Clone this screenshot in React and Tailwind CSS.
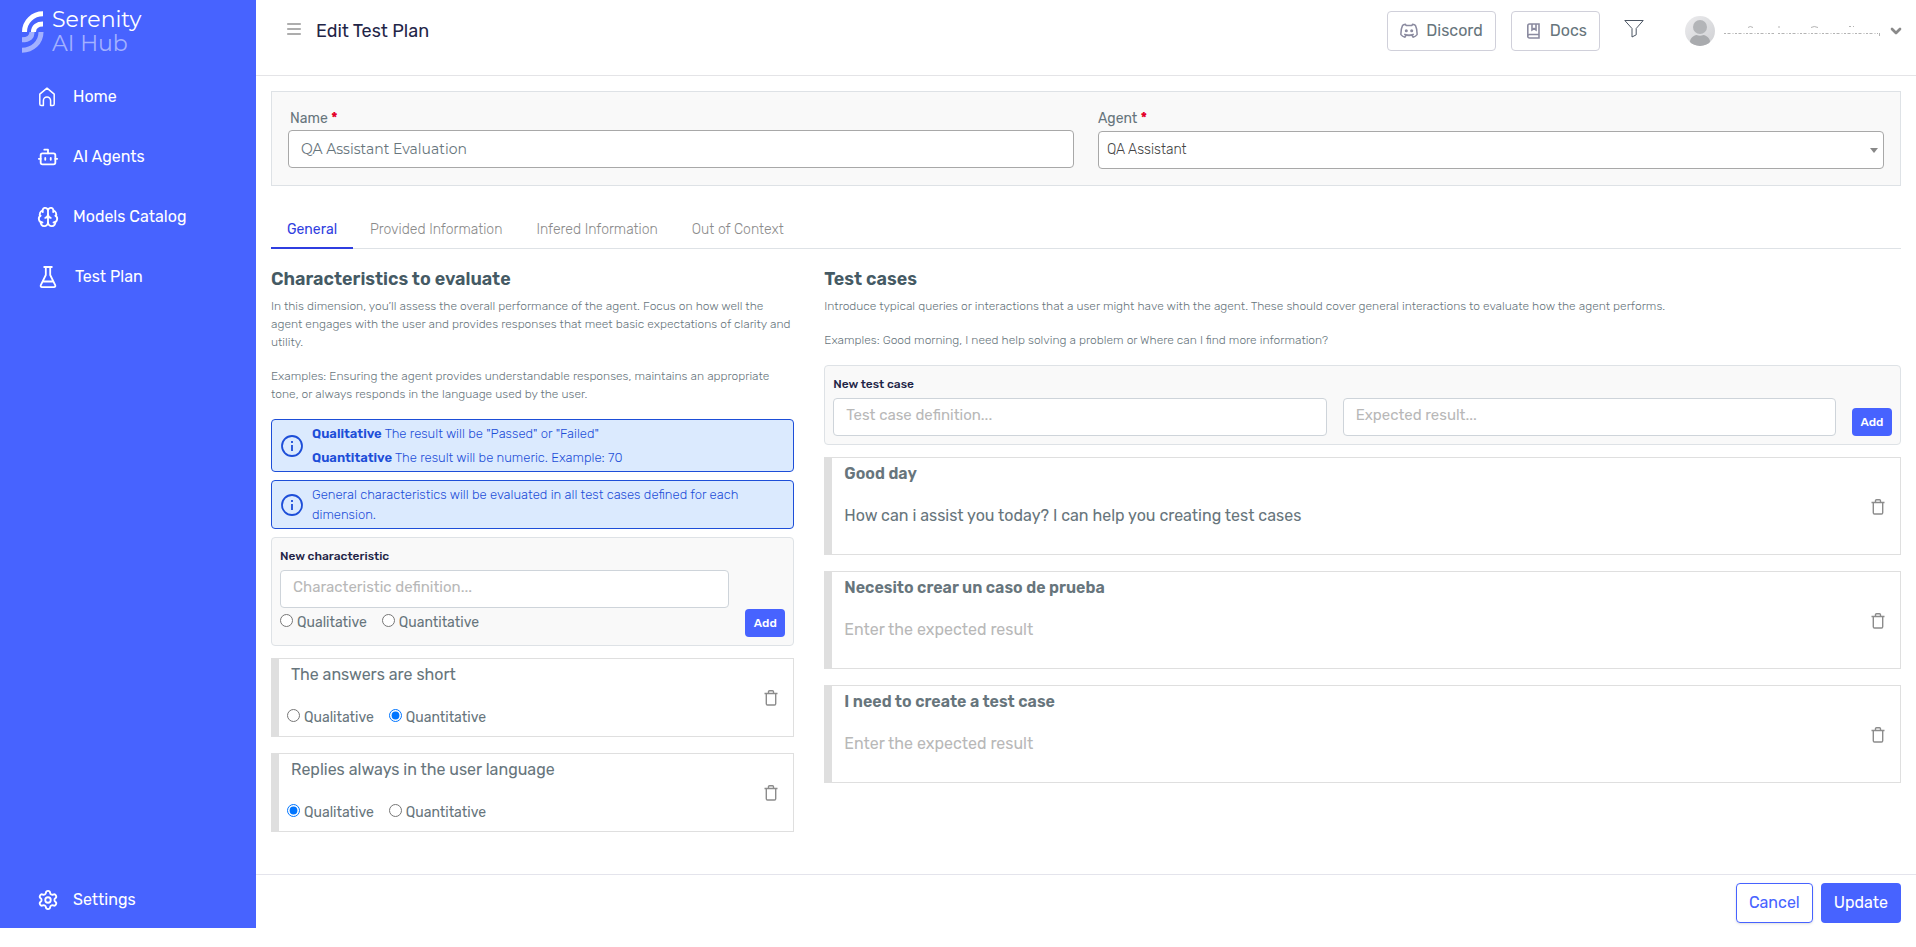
import React, { useState } from 'react';
import { Bot, Brain, Settings, ChevronDown } from 'lucide-react';

const navItems = [
    { label: 'Home', icon: 'home' },
    { label: 'AI Agents', icon: 'bot' },
    { label: 'Models Catalog', icon: 'brain' },
    { label: 'Test Plan', icon: 'flask' },
];

const tabs = ['General', 'Provided Information', 'Infered Information', 'Out of Context'];

const initialCharacteristics = [
    { id: 1, text: 'The answers are short', type: 'quantitative' },
    { id: 2, text: 'Replies always in the user language', type: 'qualitative' },
];

const initialTestCases = [
    { id: 1, input: 'Good day', expected: 'How can i assist you today? I can help you creating test cases' },
    { id: 2, input: 'Necesito crear un caso de prueba', expected: '' },
    { id: 3, input: 'I need to create a test case', expected: '' },
];

const Logo = () => (
    <a href="#" className="flex items-center gap-2 pt-2 pl-[22px] text-white">
        <svg width="22" height="42" viewBox="0 0 22 42" fill="none" strokeWidth="5">
            <path d="M2.5 21C2.5 10.5 11 2.8 21 2.8" stroke="#fff" />
            <path d="M11.5 21C11.5 15.5 15.5 13 21 13" stroke="#fff" />
            <path d="M19 21C19 31.5 10.5 39.2 0 39.2" stroke="#a3b1ff" />
            <path d="M10 21C10 26 6.5 28.8 0 28.8" stroke="#a3b1ff" />
        </svg>
        <span className="flex flex-col font-['Montserrat','Rubik','Roboto',sans-serif] text-[22px] leading-6">
            <span>Serenity</span>
            <span className="text-[#a3b1ff]">AI Hub</span>
        </span>
    </a>
);

const NavIcon = ({ name }) => {
    if (name === 'bot') return <Bot size={22} strokeWidth={2} />;
    if (name === 'brain') return <Brain size={22} strokeWidth={2} />;
    if (name === 'settings') return <Settings size={22} strokeWidth={2} />;
    if (name === 'home') {
        return (
            <svg width="22" height="22" viewBox="0 0 22 22" fill="none" stroke="currentColor" strokeWidth="1.5" strokeLinejoin="round">
                <path d="M2.8 8.2 10 2.2 17.2 8.2V18a1.6 1.6 0 0 1-1.6 1.6H13.6v-5a3.6 3.6 0 0 0-7.2 0v5H4.4A1.6 1.6 0 0 1 2.8 18z" />
            </svg>
        );
    }
    return (
        <svg width="24" height="24" viewBox="0 0 24 24" fill="none" stroke="currentColor" strokeWidth="1.8" strokeLinejoin="round">
            <path d="M6.5 2h9M8.8 2v8L3.8 20.2c-.5 1 .1 1.900 1.200 1.900h12c1.100 0 1.700-.9 1.200-1.900L13.200 10V2M6 16.500h10" />
        </svg>
    );
};

const NavLink = ({ label, icon }) => (
    <a href="#" className="flex h-14 items-center gap-[14px] pl-[37px] text-base text-white">
        <NavIcon name={icon} />
        {label}
    </a>
);

const Trash = () => (
    <svg width="14" height="16" viewBox="0 0 14 16" fill="none" stroke="#8c8c8c" strokeWidth="1.4">
        <path d="M.5 3.5h13M4.5 3.5V1.800c0-.6.400-1 1-1h3c.6 0 1 .4 1 1v1.700M2.300 3.500v10.300c0 .7.500 1.200 1.200 1.200h7c.7 0 1.200-.5 1.200-1.200V3.500" />
    </svg>
);

const InfoIcon = () => (
    <svg className="shrink-0" width="22" height="22" viewBox="0 0 22 22" fill="none" stroke="#1d4ed8" strokeWidth="1.8">
        <circle cx="11" cy="11" r="10" />
        <path d="M11 10v6M11 6v2" />
    </svg>
);

const TypeRadios = ({ name, value, onChange }) => (
    <div className="flex gap-[15px] text-sm text-[#67757c]">
        {['Qualitative', 'Quantitative'].map((label) => (
            <label key={label} className="flex items-center gap-1">
                <input
                    type="radio"
                    name={name}
                    className="mb-[6px] size-[13px] accent-[#0075ff]"
                    checked={value === label.toLowerCase()}
                    onChange={() => onChange(label.toLowerCase())}
                />
                {label}
            </label>
        ))}
    </div>
);

const inputClass =
    'h-[38px] w-full min-w-0 rounded-sm border border-[#ced4da] bg-white px-3 pb-1 text-[15px] text-[#67757c] placeholder:text-[#b8b8b8]';

const Header = () => (
    <header className="flex h-[76px] items-start border-b border-[#e4e4e7] pt-[11px] pr-3 pl-[31px]">
        <button aria-label="Toggle menu" className="mt-3">
            <svg width="14" height="12" viewBox="0 0 14 12" stroke="#929292" strokeWidth="1.4" strokeLinecap="round">
                <path d="M.7 1h12.6M.7 6h12.6M.7 11h12.6" />
            </svg>
        </button>
        <h1 className="mt-[6px] ml-[15px] text-lg leading-7 text-[#1f2547]">Edit Test Plan</h1>
        <div className="ml-auto flex">
            <button className="flex h-10 items-center gap-2 rounded border border-[#d0d0da] px-3 text-base text-[#67757c]">
                <svg width="18" height="16" viewBox="0 0 18 16" fill="none" stroke="#8b8ba0" strokeWidth="1.5" strokeLinejoin="round">
                    <path d="M6 2.5 5.5 1.3C4 1.5 3 2 2.5 2.6 1.3 5 .8 8 .9 11.600 2 13 3.500 13.800 5 14.200l1-1.900h6l1 1.900c1.500-.4 3-1.200 4.100-2.600C17.200 8 16.700 5 15.500 2.600 15 2 14 1.500 12.500 1.300L12 2.500z" />
                    <path d="M4.2 11.300c3 1.400 6.600 1.400 9.600 0" />
                    <circle cx="6.3" cy="7.8" r="0.8" fill="#8b8ba0" />
                    <circle cx="11.7" cy="7.8" r="0.8" fill="#8b8ba0" />
                </svg>
                Discord
            </button>
            <button className="ml-[15px] flex h-10 items-center gap-2 rounded border border-[#d0d0da] px-3 text-base text-[#67757c]">
                <svg width="18" height="16" viewBox="-2 0 18 16" fill="none" stroke="#8b8ba0" strokeWidth="1.6">
                    <path d="M13 11.5H3.500a1.700 1.700 0 0 0 0 3.500H13V1H3.500C2.500 1 1.800 1.700 1.800 2.700v10.500M13 11v4M6 1v6L8 5.500 10 7V1" />
                </svg>
                Docs
            </button>
            <button aria-label="Filter" className="mt-[7px] ml-6 h-5">
                <svg width="20" height="19" viewBox="0 0 20 19" fill="none" stroke="#4b5563" strokeWidth="1">
                    <path d="M.8 1.5h18.4L12.2 9.500v6.300L8 18V9.500z" />
                </svg>
            </button>
            <button aria-label="Account" className="mt-[5px] ml-[41px] flex h-[30px] items-center">
                <svg width="30" height="30" viewBox="0 0 30 30">
                    <defs>
                        <clipPath id="avatar">
                            <circle cx="15" cy="15" r="15" />
                        </clipPath>
                        <linearGradient id="avatar-bg" x1="0" y1="0" x2="1" y2="1">
                            <stop offset="0" stopColor="#ececee" />
                            <stop offset="1" stopColor="#cfd0d3" />
                        </linearGradient>
                    </defs>
                    <g clipPath="url(#avatar)">
                        <rect width="30" height="30" fill="url(#avatar-bg)" />
                        <circle cx="15" cy="11" r="7" fill="#b3b5b8" />
                        <path d="M5 30v-4c0-4 3.500-6.500 6.500-7 2 1 5 1 7 0 3 .5 6.500 3 6.500 7v4z" fill="#a9abae" />
                    </g>
                </svg>
                <svg className="ml-[9px]" width="158" height="12" viewBox="0 0 158 12" fill="none" stroke="#b4b4b4">
                    <path d="M0 8.500h50M54 8.500h100" strokeDasharray="2 1.500 3 2 1 1.500" />
                    <path d="M24 2.500q2-2 5 0M55 1v2M87 2.500q3-2 7 0M125 1.500h2M129 1.500h1M155.500 8v3" />
                </svg>
                <ChevronDown className="ml-[6px] text-[#8a8a8a]" size={16} strokeWidth={4} />
            </button>
        </div>
    </header>
);

const PlanForm = () => (
    <section className="grid grid-cols-2 gap-6 border border-[#dee2e6] bg-[#f9f9f9] px-4 pt-[17px] pb-4">
        <div>
            <label htmlFor="plan-name" className="block h-[21px] pl-[2px] text-sm leading-5 text-[#67757c]">
                Name <span className="font-bold text-[#e4002b]">*</span>
            </label>
            <input
                id="plan-name"
                defaultValue="QA Assistant Evaluation"
                className="h-[38px] w-full rounded-sm border border-[#a8a8a8] bg-white px-3 font-['Montserrat','Rubik','Roboto',sans-serif] text-sm text-[#67757c]"
            />
        </div>
        <div>
            <label htmlFor="plan-agent" className="block h-[22px] text-sm leading-5 text-[#67757c]">
                Agent <span className="font-bold text-[#e4002b]">*</span>
            </label>
            <div className="relative">
                <select
                    id="plan-agent"
                    className="h-[38px] w-full appearance-none rounded-sm border border-[#a8a8a8] bg-white px-2 text-sm font-light text-[#444]"
                >
                    <option>QA Assistant</option>
                </select>
                <span className="pointer-events-none absolute top-[17px] right-[6px] border-x-4 border-t-[5px] border-x-transparent border-t-[#888]" />
            </div>
        </div>
    </section>
);

const Characteristics = () => {
    const [items, setItems] = useState(initialCharacteristics);
    const [draft, setDraft] = useState('');
    const [draftType, setDraftType] = useState('');

    const updateType = (id, type) => {
        setItems(items.map((item) => (item.id === id ? { ...item, type } : item)));
    };

    const addItem = () => {
        if (!draft || !draftType) return;
        setItems([...items, { id: Date.now(), text: draft, type: draftType }]);
        setDraft('');
        setDraftType('');
    };

    return (
        <section className="col-span-4">
            <h2 className="text-lg leading-7 font-semibold text-[#455a64]">Characteristics to evaluate</h2>
            <p className="mt-1 text-xs leading-[18px] font-light text-[#67757c]">
                In this dimension, you’ll assess the overall performance of the agent. Focus on how well the agent
                engages with the user and provides responses that meet basic expectations of clarity and utility.
            </p>
            <p className="mt-4 text-xs leading-[18px] font-light text-[#67757c]">
                Examples: Ensuring the agent provides understandable responses, maintains an appropriate tone, or always
                responds in the language used by the user.
            </p>

            <div className="mt-4 flex h-[53px] items-center gap-[9px] rounded-sm border border-[#1d4ed8] bg-[#dbeafe] px-[9px] text-[13px] leading-6 font-light text-[#1d4ed8]">
                <InfoIcon />
                <div>
                    <p><strong className="font-semibold">Qualitative</strong> The result will be "Passed" or "Failed"</p>
                    <p><strong className="font-semibold">Quantitative</strong> The result will be numeric. Example: 70</p>
                </div>
            </div>
            <div className="mt-2 flex min-h-[49px] items-center gap-[9px] rounded-sm border border-[#1d4ed8] bg-[#dbeafe] px-[9px] text-[13px] leading-5 font-light text-[#1d4ed8]">
                <InfoIcon />
                <p>General characteristics will be evaluated in all test cases defined for each dimension.</p>
            </div>

            <div className="mt-2 flex items-end gap-4 rounded-sm border border-[#dee2e6] bg-[#f9f9f9] p-2">
                <div className="grow">
                    <label htmlFor="new-characteristic" className="block h-6 text-xs leading-5 font-medium text-[#1f2547]">
                        New characteristic
                    </label>
                    <input
                        id="new-characteristic"
                        className={inputClass}
                        placeholder="Characteristic definition..."
                        value={draft}
                        onChange={(e) => setDraft(e.target.value)}
                    />
                    <div className="pt-[5px] pb-1">
                        <TypeRadios name="new-type" value={draftType} onChange={setDraftType} />
                    </div>
                </div>
                <button onClick={addItem} className="h-7 w-10 rounded-sm bg-[#4763ff] text-xs font-medium text-white">
                    Add
                </button>
            </div>

            <div className="mt-3 flex flex-col gap-4">
                {items.map((item) => (
                    <div key={item.id} className="flex h-[79px] items-center border border-l-8 border-[#dfdfdf] pr-[15px] pl-2">
                        <div className="grow self-start pt-1">
                            <p className="mb-[21px] pl-1 text-base leading-6 text-[#67757c]">{item.text}</p>
                            <TypeRadios name={`type-${item.id}`} value={item.type} onChange={(type) => updateType(item.id, type)} />
                        </div>
                        <button
                            aria-label="Delete characteristic"
                            className="pt-px"
                            onClick={() => setItems(items.filter((i) => i.id !== item.id))}
                        >
                            <Trash />
                        </button>
                    </div>
                ))}
            </div>
        </section>
    );
};

const TestCases = () => {
    const [cases, setCases] = useState(initialTestCases);
    const [definition, setDefinition] = useState('');
    const [expected, setExpected] = useState('');

    const addCase = () => {
        if (!definition) return;
        setCases([...cases, { id: Date.now(), input: definition, expected }]);
        setDefinition('');
        setExpected('');
    };

    const updateExpected = (id, value) => {
        setCases(cases.map((c) => (c.id === id ? { ...c, expected: value } : c)));
    };

    return (
        <section className="col-span-8">
            <h2 className="text-lg leading-7 font-semibold text-[#455a64]">Test cases</h2>
            <p className="mt-1 text-xs leading-[18px] font-light text-[#67757c]">
                Introduce typical queries or interactions that a user might have with the agent. These should cover
                general interactions to evaluate how the agent performs.
            </p>
            <p className="mt-4 text-xs leading-[18px] font-light text-[#67757c]">
                Examples: Good morning, I need help solving a problem or Where can I find more information?
            </p>

            <div className="mt-4 rounded-sm border border-[#dee2e6] bg-[#f9f9f9] p-2">
                <label htmlFor="new-case" className="block h-6 text-xs leading-5 font-medium text-[#1f2547]">
                    New test case
                </label>
                <div className="flex items-end gap-4">
                    <input
                        id="new-case"
                        className={inputClass}
                        placeholder="Test case definition..."
                        value={definition}
                        onChange={(e) => setDefinition(e.target.value)}
                    />
                    <input
                        aria-label="Expected result"
                        className={inputClass}
                        placeholder="Expected result..."
                        value={expected}
                        onChange={(e) => setExpected(e.target.value)}
                    />
                    <button onClick={addCase} className="h-7 w-10 shrink-0 rounded-sm bg-[#4763ff] text-xs font-medium text-white">
                        Add
                    </button>
                </div>
            </div>

            <div className="mt-3 flex flex-col gap-4">
                {cases.map((c) => (
                    <div key={c.id} className="flex h-[98px] items-center border border-l-8 border-[#dfdfdf] pr-[15px] pl-3">
                        <div className="grow self-start pt-1">
                            <p className="text-base leading-6 font-semibold text-[#67757c]">{c.input}</p>
                            <input
                                aria-label={`Expected result for ${c.input}`}
                                className="mt-[18px] h-6 w-full text-base text-[#67757c] placeholder:text-[#b8b8b8]"
                                placeholder="Enter the expected result"
                                value={c.expected}
                                onChange={(e) => updateExpected(c.id, e.target.value)}
                            />
                        </div>
                        <button
                            aria-label="Delete test case"
                            className="pt-px"
                            onClick={() => setCases(cases.filter((i) => i.id !== c.id))}
                        >
                            <Trash />
                        </button>
                    </div>
                ))}
            </div>
        </section>
    );
};

const App = () => {
    const [activeTab, setActiveTab] = useState('General');

    return (
        <div className="flex min-h-screen bg-white font-['Rubik','Roboto',sans-serif]">
            <aside className="mb-[19px] flex w-64 shrink-0 flex-col bg-[#4763ff]">
                <Logo />
                <nav className="mt-[13px] flex grow flex-col gap-1">
                    {navItems.map((item) => (
                        <NavLink key={item.label} {...item} />
                    ))}
                    <div className="mt-auto">
                        <NavLink label="Settings" icon="settings" />
                    </div>
                </nav>
            </aside>

            <div className="flex min-w-0 grow flex-col">
                <Header />
                <main className="grow px-[15px] pt-[15px]">
                    <PlanForm />
                    <div role="tablist" className="mt-[23px] flex border-b border-[#dee2e6]">
                        {tabs.map((tab) => (
                            <button
                                key={tab}
                                role="tab"
                                aria-selected={tab === activeTab}
                                onClick={() => setActiveTab(tab)}
                                className={
                                    tab === activeTab
                                        ? '-mb-px h-10 border-b-2 border-[#2f3ee0] px-4 pt-[3px] text-sm text-[#2f3ee0]'
                                        : '-mb-px h-10 border-b-2 border-transparent px-[17px] pt-1 text-sm font-light text-[#8a8a8a]'
                                }
                            >
                                {tab}
                            </button>
                        ))}
                    </div>
                    <div className="mt-4 grid grid-cols-12 gap-[30px]">
                        <Characteristics />
                        <TestCases />
                    </div>
                </main>
                <footer className="flex h-[73px] justify-end gap-2 border-t border-[#e4e4ec] pt-2 pr-[15px]">
                    <button className="h-10 rounded-sm border border-[#4763ff] px-3 text-base text-[#4763ff] shadow-sm">Cancel</button>
                    <button className="h-10 rounded-sm bg-[#4763ff] px-[13px] text-base text-white">Update</button>
                </footer>
            </div>
        </div>
    );
};

export default App;
